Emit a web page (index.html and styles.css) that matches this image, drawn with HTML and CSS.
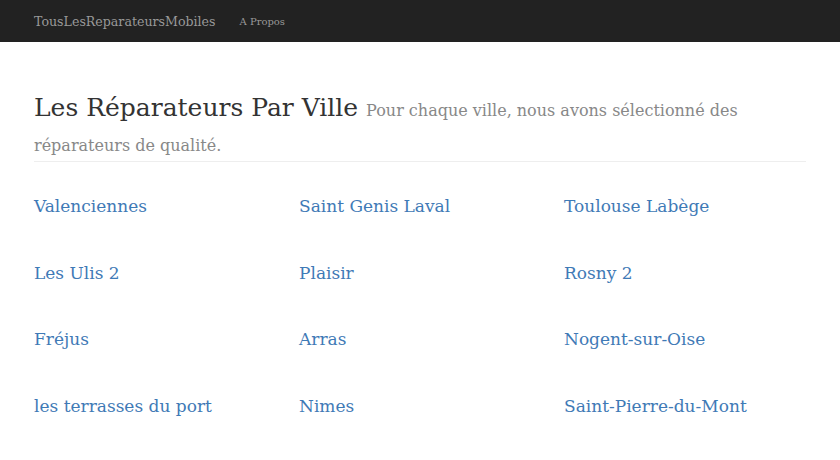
FILE: index.html
```html
<!DOCTYPE html>
<html lang="fr">
<head>
    <meta charset="UTF-8">
    <meta name="viewport" content="width=device-width, initial-scale=1.0">
    <title>TousLesReparateursMobiles</title>
    <link rel="stylesheet" href="styles.css">
</head>
<body>
    <div class="navbar">
        <div class="container nav-inner">
            <a class="brand" href="#">TousLesReparateursMobiles</a>
            <a class="nav-link" href="#">A Propos</a>
        </div>
    </div>

    <div class="container">
        <div class="page-header">
            <h1>Les Réparateurs Par Ville <small>Pour chaque ville, nous avons sélectionné des réparateurs de qualité.</small></h1>
        </div>

        <div class="cities">
            <a href="#">Valenciennes</a>
            <a href="#">Saint Genis Laval</a>
            <a href="#">Toulouse Labège</a>
            <a href="#">Les Ulis 2</a>
            <a href="#">Plaisir</a>
            <a href="#">Rosny 2</a>
            <a href="#">Fréjus</a>
            <a href="#">Arras</a>
            <a href="#">Nogent-sur-Oise</a>
            <a href="#">les terrasses du port</a>
            <a href="#">Nimes</a>
            <a href="#">Saint-Pierre-du-Mont</a>
        </div>
    </div>
</body>
</html>
```

FILE: styles.css
```css
body {
    font-family: "DejaVu Serif", serif;
    background-color: #fff;
    margin: 0;
    padding: 0;
    color: #333;
}

.container {
    width: 772px;
    margin: 0 34px;
}

.navbar {
    background-color: #222;
    height: 42px;
}

.nav-inner {
    display: flex;
    align-items: center;
    height: 42px;
}

.brand {
    color: #999;
    font-size: 12.6px;
    text-decoration: none;
}

.nav-link {
    color: #999;
    font-size: 10px;
    text-decoration: none;
    margin-left: 24px;
}

.page-header {
    margin-top: 48px;
    padding-bottom: 1px;
    border-bottom: 1px solid #eee;
}

h1 {
    font-size: 25px;
    font-weight: normal;
    line-height: 35px;
    margin: 0;
}

h1 small {
    font-size: 16px;
    line-height: 1;
    color: #888;
}

.cities {
    display: grid;
    grid-template-columns: repeat(3, 265px);
    grid-auto-rows: 66.5px;
    padding-top: 34px;
}

.cities a {
    color: #3f7ab6;
    font-size: 17px;
    text-decoration: none;
}
```
